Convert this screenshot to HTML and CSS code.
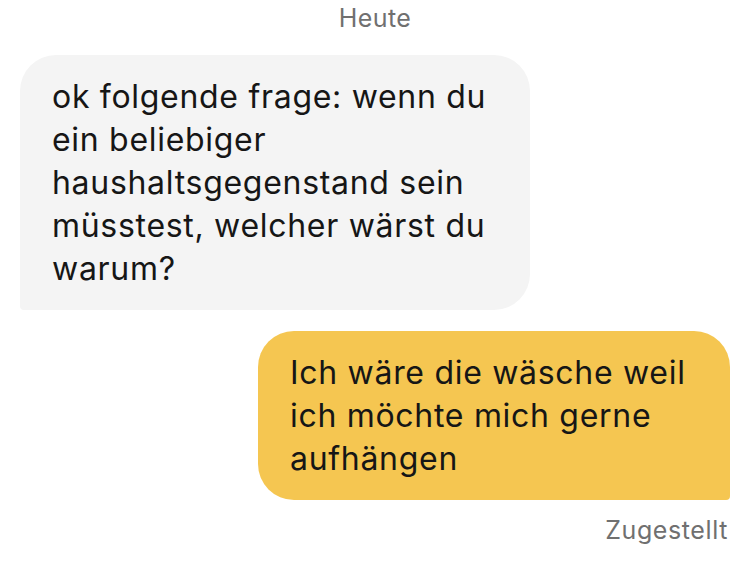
FILE: index.html
```html
<!DOCTYPE html>
<html lang="de">
	<head>
		<meta charset="UTF-8" />
		<meta name="viewport" content="width=device-width, initial-scale=1.0" />

		<link rel="stylesheet" href="styles.css">

		<title>Chat</title>
	</head>
	<body>
		<div id="chat">
			<div class="day">Heute</div>

			<div class="message incoming">
				ok folgende frage: wenn du ein beliebiger haushaltsgegenstand sein müsstest, welcher wärst du warum?
			</div>

			<div class="message outgoing">
				Ich wäre die wäsche weil ich möchte mich gerne aufhängen
			</div>

			<div class="status">Zugestellt</div>
		</div>
	</body>
</html>
```

FILE: styles.css
```css
body {
	margin: 0;
	background-color: #ffffff;
	font-family: Inter, "Open Sans", sans-serif;
}

#chat {
	display: flex;
	flex-direction: column;
	padding: 4px 20px 0;
}

.day {
	align-self: center;
	font-size: 25px;
	letter-spacing: 0.4px;
	line-height: 28px;
	color: #707070;
	margin-bottom: 23px;
}

.message {
	box-sizing: border-box;
	padding: 20px 32px;
	font-size: 32px;
	letter-spacing: 0.7px;
	line-height: 43px;
	color: #161616;
	border-radius: 36px;
}

.incoming {
	align-self: flex-start;
	width: 510px;
	background-color: #f4f4f4;
	border-bottom-left-radius: 4px;
}

.outgoing {
	align-self: flex-end;
	width: 472px;
	margin-top: 21px;
	padding-right: 28px;
	background-color: #f5c651;
	border-bottom-right-radius: 4px;
}

.status {
	align-self: flex-end;
	margin-top: 16px;
	margin-right: 2px;
	font-size: 25px;
	letter-spacing: 0.6px;
	line-height: 28px;
	color: #707070;
}
```
